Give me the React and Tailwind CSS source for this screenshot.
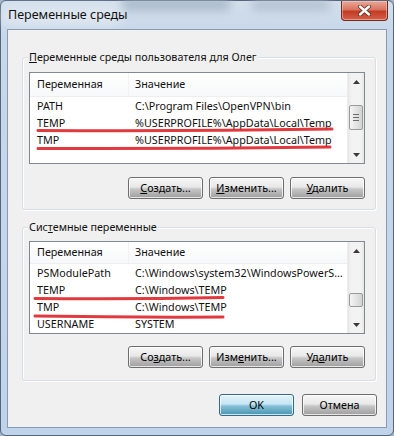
import React from "react";

const userRows = [
  ["PATH", "C:\\Program Files\\OpenVPN\\bin"],
  ["TEMP", "%USERPROFILE%\\AppData\\Local\\Temp"],
  ["TMP", "%USERPROFILE%\\AppData\\Local\\Temp"],
];

const systemRows = [
  ["PSModulePath", "C:\\Windows\\system32\\WindowsPowerS…"],
  ["TEMP", "C:\\Windows\\TEMP"],
  ["TMP", "C:\\Windows\\TEMP"],
  ["USERNAME", "SYSTEM"],
];

function Arrow({ down }) {
  return (
    <svg width="7" height="4" viewBox="0 0 7 4" className={down ? "rotate-180" : ""}>
      <path d="M0 4 L3.5 0 L7 4Z" fill="#3a3a3a" />
    </svg>
  );
}

// Win7 style list view with header + vertical scrollbar
function ListView({ rows, height, thumbTop, thumbHeight, grip }) {
  return (
    <div className={`w-[336px] border border-[#828790] bg-white flex overflow-hidden ${height}`}>
      <div className="flex-1 flex flex-col min-w-0">
        <div className="h-[24px] flex items-center border-b border-[#eeeeee] bg-[linear-gradient(#ffffff,#f7f8f9)]">
          <div className="w-[99px] h-full flex items-center pl-[7px] border-r border-[#f2f2f2]">Переменная</div>
          <div className="pl-[6px]">Значение</div>
        </div>
        <div className="pt-[1px]">
          {rows.map(([name, value], i) => (
            <div key={i} className="h-[17px] flex items-center whitespace-nowrap">
              <div className="w-[99px] pl-[7px]">{name}</div>
              <div className="pl-[6px] overflow-hidden">{value}</div>
            </div>
          ))}
        </div>
      </div>
      <div className="w-[17px] flex flex-col bg-[linear-gradient(90deg,#e6e6e6,#f3f3f3_20%,#f3f3f3_80%,#e6e6e6)] border-l border-[#ececec]">
        <div className="h-[17px] flex items-center justify-center"><Arrow /></div>
        <div className="flex-1">
          <div
            className={`mx-[1px] rounded-[2px] border border-[#9a9a9a] bg-[linear-gradient(90deg,#f5f5f5,#e4e4e4_50%,#d2d2d2)] flex flex-col items-center justify-center gap-[2px] ${thumbTop} ${thumbHeight}`}
          >
            {grip && (
              <>
                <div className="w-[6px] h-[1px] bg-[#6b6b6b]" />
                <div className="w-[6px] h-[1px] bg-[#6b6b6b]" />
                <div className="w-[6px] h-[1px] bg-[#6b6b6b]" />
              </>
            )}
          </div>
        </div>
        <div className="h-[17px] flex items-center justify-center"><Arrow down /></div>
      </div>
    </div>
  );
}

function Btn({ children, primary }) {
  return (
    <button
      className={`w-[75px] h-[22px] rounded-[3px] border flex items-center justify-center text-black shadow-[inset_0_0_0_1px_rgba(255,255,255,0.75)] ${
        primary
          ? "border-[#2f6a92] bg-[linear-gradient(#e3f3fb_0%,#c6e5f4_45%,#86c0d8_55%,#4a93ad_100%)]"
          : "border-[#6e6e6e] bg-[linear-gradient(#f7f7f7_0%,#e8e8e8_45%,#c6c6c6_55%,#9e9e9e_100%)]"
      }`}
    >
      {children}
    </button>
  );
}

function GroupBox({ label, children, className }) {
  return (
    <div className={`relative mx-[14px] w-[354px] rounded-[3px] border border-[#d5dfe5] shadow-[inset_1px_1px_0_#ffffff,1px_1px_0_#ffffff] pl-[6px] pr-[10px] ${className}`}>
      <span className="absolute -top-[8px] left-[5px] px-[1px] h-[14px] leading-[14px] bg-[#f0f0f0]">{label}</span>
      {children}
    </div>
  );
}

export default function App() {
  return (
    <div className="w-[394px] h-[436px] relative overflow-hidden bg-[#9fb3c8] font-['Noto_Sans',sans-serif] text-[10.75px] text-[#111111]">
      {/* window frame */}
      <div className="w-full h-full flex flex-col rounded-[6px] border border-[#55657a] bg-[linear-gradient(#d3dfeb_0px,#c8d8ea_30px,#bfd3eb_100%)] px-[6px] pb-[7px] relative">
        {/* blurred glass background */}
        <div className="absolute left-[120px] top-[-4px] w-[110px] h-[14px] rounded-full bg-[#9eaec0] blur-[5px] opacity-70" />
        <div className="absolute left-[250px] top-[-2px] w-[80px] h-[12px] rounded-full bg-[#aab8c8] blur-[5px] opacity-70" />
        <div className="absolute left-[0px] top-[6px] w-[120px] h-[18px] rounded-full bg-[#e4ebf2] blur-[6px] opacity-80" />

        <div className="h-[28px] flex items-center pl-[1px] text-[12.5px] relative">Переменные среды</div>

        {/* close button */}
        <div className="absolute right-[5px] top-0 w-[47px] h-[20px] rounded-b-[4px] border border-t-0 border-[#6e2b20] bg-[linear-gradient(#eaa999_0%,#d77560_45%,#c23b24_55%,#d5604a_100%)] flex items-center justify-center shadow-[inset_0_0_0_1px_rgba(255,210,200,0.5)]">
          <svg width="13" height="11" viewBox="0 0 13 11">
            <path d="M2 1.5 L11 9.5 M11 1.5 L2 9.5" stroke="#5a2a22" strokeWidth="4" strokeLinecap="round" />
            <path d="M2 1.5 L11 9.5 M11 1.5 L2 9.5" stroke="#ffffff" strokeWidth="2.4" strokeLinecap="round" />
          </svg>
        </div>

        {/* client area */}
        <div className="flex-1 border border-[#8a9bb1] bg-[#f0f0f0] flex flex-col relative">
          <GroupBox label={<><u>П</u>еременные среды пользователя для Олег</>} className="mt-[27px] pt-[14px] pb-[10px]">
            <ListView rows={userRows} height="h-[92px]" thumbTop="mt-[15px]" thumbHeight="h-[25px]" grip />
            <div className="flex justify-end gap-[6px] mt-[13px]">
              <Btn><span><u>С</u>оздать...</span></Btn>
              <Btn><span><u>И</u>зменить...</span></Btn>
              <Btn><span><u>У</u>далить</span></Btn>
            </div>
          </GroupBox>

          <GroupBox label={<>Сис<u>т</u>емные переменные</>} className="mt-[17px] pt-[13px] pb-[12px]">
            <ListView rows={systemRows} height="h-[93px]" thumbTop="mt-[34px]" thumbHeight="h-[14px]" />
            <div className="flex justify-end gap-[6px] mt-[12px]">
              <Btn><span>Со<u>з</u>дать...</span></Btn>
              <Btn><span>Изм<u>е</u>нить...</span></Btn>
              <Btn><span>Уд<u>а</u>лить</span></Btn>
            </div>
          </GroupBox>

          <div className="flex justify-end gap-[8px] mt-[13px] pr-[9px]">
            <Btn primary>OK</Btn>
            <Btn>Отмена</Btn>
          </div>
        </div>
      </div>

      {/* red marker lines */}
      <svg className="absolute inset-0 pointer-events-none" width="394" height="436">
        <g stroke="#df2a2e" strokeWidth="3" strokeLinecap="round" fill="none" opacity="0.92">
          <path d="M38 130.5 Q 185 131.5 332 129" />
          <path d="M38 148.5 Q 185 149 330 147" />
          <path d="M35 298.5 Q 130 299.5 223 297.5" />
          <path d="M35 316 Q 130 317.5 223 317" />
        </g>
      </svg>
    </div>
  );
}
